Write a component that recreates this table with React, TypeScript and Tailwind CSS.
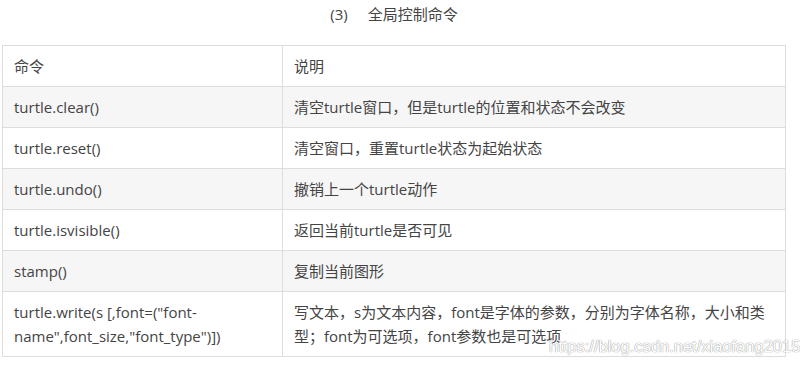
import React from "react";

const rows: [string, string][] = [
  ["turtle.clear()", "清空turtle窗口，但是turtle的位置和状态不会改变"],
  ["turtle.reset()", "清空窗口，重置turtle状态为起始状态"],
  ["turtle.undo()", "撤销上一个turtle动作"],
  ["turtle.isvisible()", "返回当前turtle是否可见"],
  ["stamp()", "复制当前图形"],
  [
    'turtle.write(s [,font=("font-name",font_size,"font_type")])',
    "写文本，s为文本内容，font是字体的参数，分别为字体名称，大小和类型；font为可选项，font参数也是可选项",
  ],
];

export default function App() {
  return (
    <div
      className="relative w-[800px] h-[365px] bg-white text-[#444] overflow-hidden"
      style={{ fontFamily: '"Open Sans", "Noto Sans CJK SC", sans-serif' }}
    >
      <div className="w-[784px] ml-[2px] pt-[4px] h-[45px] text-center text-[15px] leading-[20px]">
        <span>(3)</span>
        <span className="ml-[20px]">全局控制命令</span>
      </div>
      <table className="table-fixed border-collapse w-[784px] ml-[2px] text-[15px] leading-6">
        <colgroup>
          <col className="w-[280px]" />
          <col />
        </colgroup>
        <tbody>
          <tr className="bg-white">
            <td className="border border-[#dddddd] px-[11px] py-2 align-middle">命令</td>
            <td className="border border-[#dddddd] px-[11px] py-2 align-middle">说明</td>
          </tr>
          {rows.map(([a, b], i) => (
            <tr key={i} className={i % 2 === 0 ? "bg-[#f6f6f6]" : "bg-white"}>
              <td className="border border-[#dddddd] px-[11px] py-2 align-middle break-words">{a}</td>
              <td className="border border-[#dddddd] px-[11px] py-2 align-middle">{b}</td>
            </tr>
          ))}
        </tbody>
      </table>
      <div
        className="absolute left-[549px] top-[336px] text-[16.5px] leading-[20px] text-white whitespace-nowrap"
        style={{
          fontFamily: '"Liberation Sans", Arial, sans-serif',
          textShadow: "0 0 1px #999, 0 0 1px #999",
        }}
      >
        https://blog.csdn.net/xiaofang2015
      </div>
    </div>
  );
}
